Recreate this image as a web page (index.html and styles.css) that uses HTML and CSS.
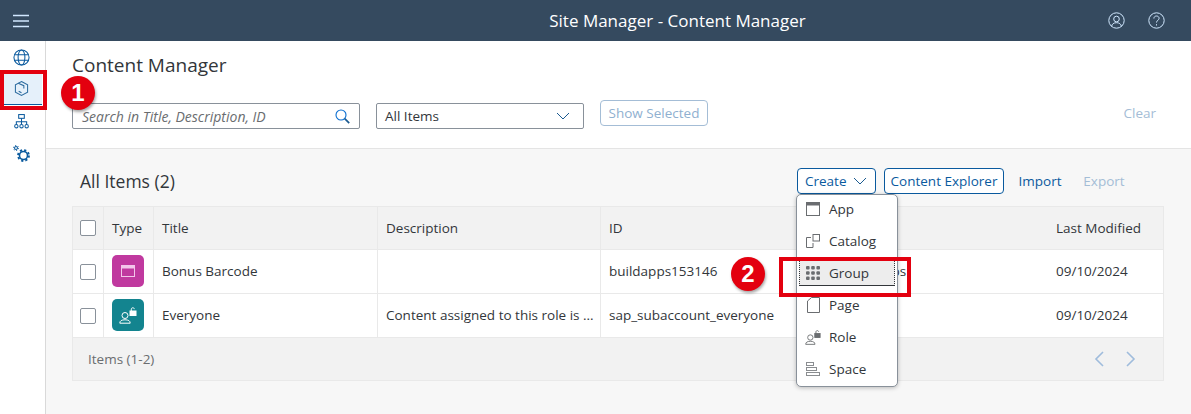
FILE: index.html
```html
<!DOCTYPE html>
<html lang="en">
<head>
  <meta charset="UTF-8" />
  <meta name="viewport" content="width=device-width, initial-scale=1.0"/>
  <title>Site Manager - Content Manager</title>
  <link rel="stylesheet" href="styles.css">
</head>
<body>
  <header class="shell">
    <button class="shell-btn" aria-label="Menu">
      <svg width="16" height="14" viewBox="0 0 16 14"><path d="M0 1.500h16M0 7h16M0 12.500h16" stroke="#d1e8ff" stroke-width="1.600"/></svg>
    </button>
    <div class="shell-title">Site Manager - Content Manager</div>
    <div class="shell-actions">
      <svg width="17" height="17" viewBox="0 0 17 17" fill="none" stroke="#d1e8ff"><circle cx="8.500" cy="8.500" r="7.700"/><circle cx="8.500" cy="7" r="2.800"/><path d="M3.600 14.400c.4-2.400 2-3.700 4.900-3.700s4.500 1.300 4.900 3.700"/></svg>
      <svg width="17" height="17" viewBox="0 0 17 17" fill="none" stroke="#d1e8ff"><circle cx="8.500" cy="8.500" r="7.700"/><path d="M5.900 6.500c0-1.600 1.200-2.500 2.600-2.500s2.600 .9 2.600 2.300c0 2-2.600 2-2.600 4.200"/><path d="M8.500 12.200v1.300"/></svg>
    </div>
  </header>

  <div class="layout">
    <nav class="sidenav">
      <a class="nav-item">
        <svg width="17" height="17" viewBox="0 0 18 18" fill="none" stroke="#0a5a9e" stroke-width="1.100"><circle cx="9" cy="9" r="8"/><ellipse cx="9" cy="9" rx="3.600" ry="8"/><path d="M1.600 6h14.800M1.600 12h14.800"/></svg>
      </a>
      <a class="nav-item is-active">
        <svg width="15" height="17" viewBox="0 0 16 17" fill="none" stroke="#2a6a9e" stroke-width="1.100"><path d="M8 1l6.500 3.500v8L8 16l-6.500-3.500v-8z"/><path d="M4.500 3l6 2.500v3M5 11.500l3 1.500"/></svg>
      </a>
      <a class="nav-item">
        <svg width="15" height="15" viewBox="0 0 16 16" fill="none" stroke="#0a5a9e" stroke-width="1.100"><rect x="5" y=".6" width="6" height="4"/><path d="M8 4.600v3.600M2.500 11V8.200h11V11M8 8.200V11"/><circle cx="2.500" cy="13" r="1.800"/><circle cx="8" cy="13" r="1.800"/><circle cx="13.500" cy="13" r="1.800"/></svg>
      </a>
      <a class="nav-item">
        <svg width="17" height="17" viewBox="0 0 17 17" fill="none" stroke="#0a5a9e"><circle cx="10.500" cy="10.500" r="4" stroke-width="1.600"/><circle cx="10.500" cy="10.500" r="5.500" stroke-width="1.800" stroke-dasharray="2.200 2.120"/><circle cx="3" cy="3" r="1.500" stroke-width="1"/><circle cx="3" cy="3" r="2.500" stroke-width="1" stroke-dasharray="1.200 1.420"/></svg>
      </a>
    </nav>

    <main class="main">
      <section class="page-head">
        <h1 class="page-title">Content Manager</h1>
        <div class="filters">
          <div class="search">
            <span class="search-text">Search in Title, Description, ID</span>
            <svg width="15" height="15" viewBox="0 0 15 15" fill="none" stroke="#0a6ed1"><circle cx="6" cy="6" r="5" stroke-width="1.100"/><path d="M9.700 9.700l4.500 4.500" stroke-width="1.700" stroke="#1a5a90"/></svg>
          </div>
          <div class="select">
            <span>All Items</span>
            <svg width="14" height="8" viewBox="0 0 14 8" fill="none" stroke="#1a5a90"><path d="M1 1l6 6 6-6"/></svg>
          </div>
          <button class="btn btn-off">Show Selected</button>
          <span class="clear">Clear</span>
        </div>
      </section>

      <section class="list">
        <div class="list-bar">
          <h2 class="list-title">All Items (2)</h2>
          <div class="list-actions">
            <button class="btn btn-create">Create
              <svg width="14" height="8" viewBox="0 0 14 8" fill="none" stroke="#1a5a90"><path d="M1 1l6 6 6-6"/></svg>
            </button>
            <button class="btn btn-explorer">Content Explorer</button>
            <button class="link">Import</button>
            <button class="link link-off">Export</button>
          </div>
        </div>

        <div class="table">
          <div class="row row-head">
            <div class="cell"><span class="check"></span></div>
            <div class="cell">Type</div>
            <div class="cell">Title</div>
            <div class="cell">Description</div>
            <div class="cell">ID</div>
            <div class="cell"></div>
            <div class="cell">Last Modified</div>
          </div>
          <div class="row">
            <div class="cell"><span class="check"></span></div>
            <div class="cell"><span class="type type-app">
              <svg width="14" height="14" viewBox="0 0 14 14" fill="none" stroke="#f3c6ea"><rect x=".5" y="1.500" width="13" height="11"/><rect x=".5" y="1.500" width="13" height="2.500" fill="#f3c6ea"/></svg>
            </span></div>
            <div class="cell">Bonus Barcode</div>
            <div class="cell"></div>
            <div class="cell">buildapps153146</div>
            <div class="cell">Build Apps</div>
            <div class="cell">09/10/2024</div>
          </div>
          <div class="row">
            <div class="cell"><span class="check"></span></div>
            <div class="cell"><span class="type type-role">
              <svg width="18" height="17" viewBox="0 0 18 17" fill="none" stroke="#fff"><circle cx="6" cy="8.500" r="3"/><path d="M.8 16.200c0-2.400 1.800-3.400 5.200-3.400s5.200 1 5.200 3.400z"/><rect x="11" y="4" width="6" height="4.500" fill="#fff"/><path d="M12.300 4V2.200c0-1.900 3-1.900 3-.1"/></svg>
            </span></div>
            <div class="cell">Everyone</div>
            <div class="cell">Content assigned to this role is ...</div>
            <div class="cell">sap_subaccount_everyone</div>
            <div class="cell"></div>
            <div class="cell">09/10/2024</div>
          </div>
          <div class="table-foot">
            <span class="foot-count">Items (1-2)</span>
            <span class="pager">
              <svg width="10" height="16" viewBox="0 0 10 16" fill="none" stroke="#9fbcdc" stroke-width="1.600"><path d="M9 1L2 8l7 7"/></svg>
              <svg width="10" height="16" viewBox="0 0 10 16" fill="none" stroke="#9fbcdc" stroke-width="1.600"><path d="M1 1l7 7-7 7"/></svg>
            </span>
          </div>
        </div>
      </section>
    </main>
  </div>

  <ul class="menu">
    <li class="menu-item">
      <span class="menu-icon"><svg width="14" height="14" viewBox="0 0 14 14" fill="none" stroke="#6a6d70"><rect x=".5" y=".5" width="13" height="13"/><rect x=".5" y=".5" width="13" height="2.500" fill="#6a6d70"/></svg></span>App
    </li>
    <li class="menu-item">
      <span class="menu-icon"><svg width="14" height="14" viewBox="0 0 14 14" fill="none" stroke="#6a6d70"><rect x="7" y=".5" width="6.500" height="6.500"/><path d="M5 3.500H.5v10H7V9"/></svg></span>Catalog
    </li>
    <li class="menu-item is-focus">
      <span class="menu-icon"><svg width="14" height="14" viewBox="0 0 14 14" fill="#6a6d70"><rect width="3.600" height="3.600" rx="1"/><rect x="5.200" width="3.600" height="3.600" rx="1"/><rect x="10.400" width="3.600" height="3.600" rx="1"/><rect y="5.200" width="3.600" height="3.600" rx="1"/><rect x="5.200" y="5.200" width="3.600" height="3.600" rx="1"/><rect x="10.400" y="5.200" width="3.600" height="3.600" rx="1"/><rect y="10.400" width="3.600" height="3.600" rx="1"/><rect x="5.200" y="10.400" width="3.600" height="3.600" rx="1"/><rect x="10.400" y="10.400" width="3.600" height="3.600" rx="1"/></svg></span>Group
    </li>
    <li class="menu-item">
      <span class="menu-icon"><svg width="13" height="16" viewBox="0 0 13 16" fill="none" stroke="#6a6d70"><path d="M4.500 .5h8v15H.5V4z"/></svg></span>Page
    </li>
    <li class="menu-item">
      <span class="menu-icon"><svg width="18" height="17" viewBox="0 0 18 17" fill="none" stroke="#6a6d70"><circle cx="6" cy="8.500" r="3"/><path d="M.8 16.200c0-2.400 1.800-3.400 5.200-3.400s5.200 1 5.200 3.400z"/><rect x="11" y="4" width="6" height="4.500" fill="#6a6d70"/><path d="M12.300 4V2.200c0-1.900 3-1.900 3-.1"/></svg></span>Role
    </li>
    <li class="menu-item">
      <span class="menu-icon"><svg width="14" height="14" viewBox="0 0 14 14" fill="none" stroke="#8a8d90"><rect x=".5" y=".5" width="7" height="3"/><rect x=".5" y="5.500" width="10" height="3"/><rect x=".5" y="10.500" width="13" height="3"/></svg></span>Space
    </li>
  </ul>

  <div class="mark mark-nav"></div>
  <div class="mark mark-group"></div>
  <div class="step step-one">1</div>
  <div class="step step-two">2</div>
</body>
</html>
```

FILE: styles.css
```css
* {
  box-sizing: border-box;
}

html, body {
  height: 100%;
}

body {
  margin: 0;
  font-family: 'Open Sans', 'Liberation Sans', sans-serif;
  font-size: 13.5px;
  color: #32363a;
  background: #f7f7f7;
  overflow: hidden;
  display: flex;
  flex-direction: column;
}

button {
  font-family: inherit;
}

/* shell bar */
.shell {
  height: 41px;
  flex: none;
  background: #354a5f;
  display: flex;
  align-items: center;
  padding: 0 26px 0 13px;
}

.shell-btn {
  display: flex;
  padding: 0;
  background: none;
  border: none;
}

.shell-title {
  flex: 1;
  text-align: center;
  color: #fff;
  font-size: 17px;
  padding-left: 218px;
}

.shell-actions {
  display: flex;
  gap: 23px;
}

/* side navigation */
.layout {
  flex: 1;
  display: flex;
  min-height: 0;
}

.sidenav {
  width: 46px;
  flex: none;
  background: #fff;
  border-right: 1px solid #d9d9d9;
}

.nav-item {
  display: flex;
  width: 42px;
  height: 32px;
  align-items: center;
  justify-content: center;
}

.nav-item.is-active {
  background: #e5f0fa;
  border-bottom: 1px solid #0a5a9e;
}

/* page header */
.main {
  flex: 1;
  min-width: 0;
}

.page-head {
  height: 108px;
  background: #fff;
  border-bottom: 1px solid #e4e4e4;
  padding: 11px 35px 0 26px;
}

.page-title {
  margin: 0;
  font-size: 19px;
  font-weight: 400;
  line-height: 26px;
}

.filters {
  margin-top: 25px;
  display: flex;
  align-items: flex-start;
}

.search {
  width: 288px;
  height: 26px;
  border: 1px solid #89919a;
  border-radius: 2px;
  display: flex;
  align-items: center;
  justify-content: space-between;
  padding: 0 9px;
}

.search-text {
  font-size: 14px;
  font-style: italic;
  color: #6a6d70;
}

.select {
  width: 208px;
  height: 26px;
  margin-left: 16px;
  border: 1px solid #89919a;
  border-radius: 2px;
  display: flex;
  align-items: center;
  justify-content: space-between;
  padding: 0 13px 0 8px;
}

.btn {
  height: 26px;
  padding: 0 7px;
  font-size: 13.5px;
  color: #0a5a9e;
  background: #fff;
  border: 1px solid #0a5a9e;
  border-radius: 4px;
}

.btn-off {
  width: 108px;
  margin: -3px 0 0 16px;
  padding: 0;
  color: #8fb0d0;
  border-color: #a4bdd6;
}

.clear {
  margin: 0 0 0 auto;
  line-height: 20px;
  color: #a4bdd6;
}

/* list section */
.list {
  padding: 19px 27px 0 26px;
}

.list-bar {
  height: 38px;
  display: flex;
  align-items: flex-start;
  justify-content: space-between;
}

.list-title {
  margin: 0 0 0 8px;
  font-size: 17.5px;
  font-weight: 400;
  line-height: 26px;
}

.list-actions {
  display: flex;
  align-items: center;
  margin-right: 28px;
}

.btn-create {
  width: 79px;
  display: flex;
  align-items: center;
  justify-content: space-between;
  padding-right: 8px;
  margin-right: 8px;
}

.btn-explorer {
  width: 120px;
  padding: 0;
  margin-right: 4px;
}

.link {
  width: 64px;
  background: none;
  border: none;
  padding: 0;
  font-size: 13.5px;
  color: #0a5a9e;
}

.link-off {
  color: #a4bdd6;
}

/* table */
.table {
  border: 1px solid #e9e9e9;
  background: #fff;
}

.row {
  display: grid;
  grid-template-columns: 31px 50px 224px 223px 224px 223px 1fr;
  height: 44px;
  border-bottom: 1px solid #e9e9e9;
}

.row-head {
  height: 43px;
  background: #f2f2f2;
}

.cell {
  display: flex;
  align-items: center;
  padding: 0 8px 1px;
  border-right: 1px solid #e9e9e9;
  white-space: nowrap;
  overflow: hidden;
}

.cell:first-child {
  padding: 0 0 0 7px;
}

.cell:nth-child(5), .cell:nth-child(6) {
  border-right-color: transparent;
}

.cell:nth-child(6) {
  padding-left: 14px;
}

.cell:last-child {
  border-right: none;
}

.check {
  width: 16px;
  height: 16px;
  background: #fff;
  border: 1px solid #89919a;
  border-radius: 2px;
}

.type {
  width: 32px;
  height: 32px;
  border-radius: 5px;
  display: flex;
  align-items: center;
  justify-content: center;
}

.type-app {
  background: #c0399f;
}

.type-role {
  background: #13848f;
}

.table-foot {
  height: 42px;
  background: #f2f2f2;
  display: flex;
  align-items: center;
  justify-content: space-between;
  padding: 0 27px 0 15px;
}

.foot-count {
  color: #6a6d70;
}

.pager {
  display: flex;
  gap: 22px;
}

/* create menu and callouts */
.menu {
  position: absolute;
  left: 796px;
  top: 194px;
  width: 102px;
  height: 193px;
  margin: 0;
  padding: 0;
  list-style: none;
  background: #fff;
  border: 1px solid #89919a;
  border-radius: 5px;
  box-shadow: 0 1px 4px rgba(0, 0, 0, .25);
}

.menu-item {
  height: 32px;
  display: flex;
  align-items: center;
  gap: 8px;
  padding-left: 8px;
}

.menu-item:first-child {
  margin-top: -2px;
}

.menu-icon {
  width: 16px;
  display: flex;
  justify-content: center;
  flex: none;
}

.menu-item.is-focus {
  height: 26px;
  margin: 3px 2px;
  padding-left: 5px;
  background: #ededed;
  border: 1px dotted #32363a;
  border-top-color: #777;
  border-bottom: 1px solid #32363a;
}

.mark {
  position: absolute;
  border: 4px solid #e3000f;
}

.mark-nav {
  left: 0;
  top: 70px;
  width: 47px;
  height: 40px;
}

.mark-group {
  left: 779px;
  top: 257px;
  width: 132px;
  height: 40px;
}

.step {
  position: absolute;
  width: 34px;
  height: 34px;
  border-radius: 50%;
  background: #e3000f;
  color: #fff;
  font: 700 24px/34px 'Liberation Sans', sans-serif;
  text-align: center;
  box-shadow: 1px 2px 3px rgba(0, 0, 0, .35);
}

.step-one {
  left: 61px;
  top: 76px;
}

.step-two {
  left: 731px;
  top: 257px;
}
```
